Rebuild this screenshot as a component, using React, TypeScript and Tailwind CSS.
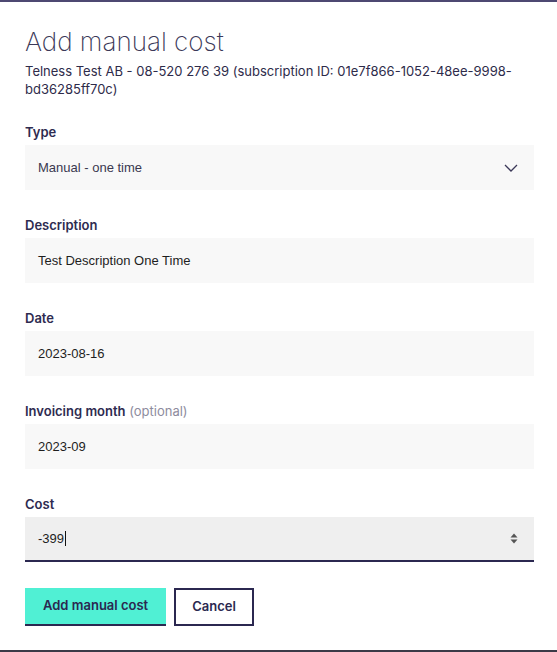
import React from 'react';

const sans = "font-['Inter','Noto_Sans',sans-serif]";
const fieldFont = "font-['Liberation_Sans','Arial',sans-serif]";

function Label({ children, hint }: { children: React.ReactNode; hint?: string }) {
  return (
    <div className={`${sans} text-[13px] leading-[17px] font-semibold text-[#2e2b50] mb-[4px]`}>
      {children}
      {hint && <span className="font-normal text-[#8e8c9e]"> {hint}</span>}
    </div>
  );
}

function Field({ value, dim }: { value: string; dim?: boolean }) {
  return (
    <div
      className={`${fieldFont} h-[45px] bg-[#f8f8f8] flex items-center px-[13px] text-[13px] ${
        dim ? 'text-[#3a3850]' : 'text-[#1e1e1e]'
      }`}
    >
      {value}
    </div>
  );
}

export default function App() {
  return (
    <div className="w-[557px] h-[652px] bg-white border-t-2 border-t-[#4d4872] border-b-2 border-b-[#3b3a47] pl-[25px] pr-[23px] pt-[24px]">
      <h1 className={`${sans} text-[26px] leading-[32px] font-extralight text-[#3b3858]`}>Add manual cost</h1>
      <p className={`${sans} mt-[5px] text-[13px] leading-[17.5px] text-[#2e2b4a]`}>
        Telness Test AB - 08-520 276 39 (subscription ID: 01e7f866-1052-48ee-9998-bd36285ff70c)
      </p>

      <div className="mt-[26px] flex flex-col gap-[27px]">
        <div>
          <Label>Type</Label>
          <div
            className={`${fieldFont} h-[45px] bg-[#f8f8f8] flex items-center justify-between pl-[13px] pr-[16px] text-[13px] text-[#3a3850]`}
          >
            <span>Manual - one time</span>
            <svg width="14" height="8" viewBox="0 0 14 8" fill="none">
              <path d="M1 1l6 6 6-6" stroke="#3b3858" strokeWidth="1.3" />
            </svg>
          </div>
        </div>

        <div>
          <Label>Description</Label>
          <Field value="Test Description One Time" />
        </div>

        <div>
          <Label>Date</Label>
          <Field value="2023-08-16" />
        </div>

        <div>
          <Label hint="(optional)">Invoicing month</Label>
          <Field value="2023-09" />
        </div>

        <div>
          <Label>Cost</Label>
          <div
            className={`${fieldFont} h-[45px] bg-[#efefef] border-b-2 border-b-[#2b2850] flex items-center justify-between pl-[13px] pr-[16px] text-[13px] text-[#1e1e1e]`}
          >
            <span className="flex items-center">
              -399
              <span className="inline-block w-px h-[15px] bg-[#111] ml-px" />
            </span>
            <svg width="8" height="11" viewBox="0 0 8 11">
              <path d="M4 0.5L7.5 4.5H0.5Z" fill="#555" />
              <path d="M4 10.5L7.5 6.5H0.5Z" fill="#555" />
            </svg>
          </div>
        </div>
      </div>

      <div className="mt-[26px] flex gap-[8px]">
        <button
          className={`${sans} h-[38px] px-[18px] bg-[#50f0d4] border-b-2 border-b-[#2b2850] text-[13px] font-semibold text-[#2b2850]`}
        >
          Add manual cost
        </button>
        <button
          className={`${sans} h-[38px] px-[16px] bg-white border-2 border-[#2b2850] text-[13px] font-semibold text-[#2b2850]`}
        >
          Cancel
        </button>
      </div>
    </div>
  );
}
